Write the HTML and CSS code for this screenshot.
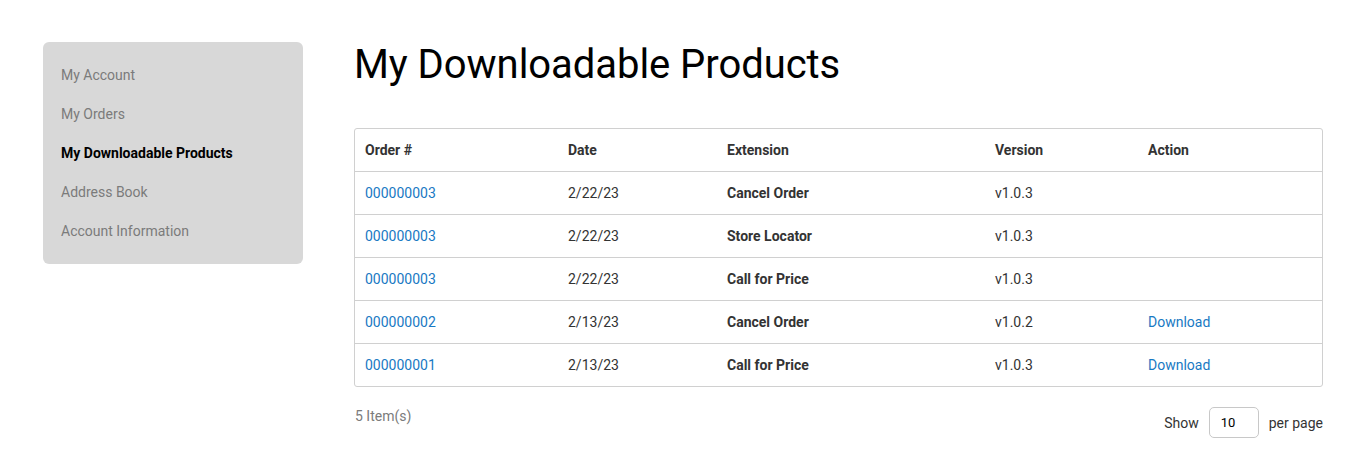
FILE: index.html
```html
<!DOCTYPE html>
<html>
<head>
<meta charset="utf-8">
<link rel="stylesheet" href="styles.css">
</head>
<body>
<div class="page">
  <aside class="sidebar">
    <ul class="nav">
      <li class="nav-item">My Account</li>
      <li class="nav-item">My Orders</li>
      <li class="nav-item active">My Downloadable Products</li>
      <li class="nav-item">Address Book</li>
      <li class="nav-item">Account Information</li>
    </ul>
  </aside>
  <main class="main">
    <h1 class="title">My Downloadable Products</h1>
    <div class="table-wrap">
      <table class="table">
        <colgroup>
          <col class="c1"><col class="c2"><col class="c3"><col class="c4"><col class="c5">
        </colgroup>
        <thead>
          <tr><th>Order #</th><th>Date</th><th>Extension</th><th>Version</th><th>Action</th></tr>
        </thead>
        <tbody>
          <tr><td><a class="link">000000003</a></td><td>2/22/23</td><td class="ext">Cancel Order</td><td>v1.0.3</td><td></td></tr>
          <tr><td><a class="link">000000003</a></td><td>2/22/23</td><td class="ext">Store Locator</td><td>v1.0.3</td><td></td></tr>
          <tr><td><a class="link">000000003</a></td><td>2/22/23</td><td class="ext">Call for Price</td><td>v1.0.3</td><td></td></tr>
          <tr><td><a class="link">000000002</a></td><td>2/13/23</td><td class="ext">Cancel Order</td><td>v1.0.2</td><td><a class="link">Download</a></td></tr>
          <tr><td><a class="link">000000001</a></td><td>2/13/23</td><td class="ext">Call for Price</td><td>v1.0.3</td><td><a class="link">Download</a></td></tr>
        </tbody>
      </table>
    </div>
    <div class="toolbar">
      <span class="count">5 Item(s)</span>
      <div class="limiter">
        <span>Show</span>
        <div class="select">10</div>
        <span>per page</span>
      </div>
    </div>
  </main>
</div>
</body>
</html>
```
FILE: styles.css
```css
html, body {
  margin: 0;
  padding: 0;
  background: #fff;
  font-family: Roboto, "Liberation Sans", sans-serif;
  font-size: 14px;
  color: #333;
}
.page {
  display: flex;
  align-items: flex-start;
  padding: 42px 40px 0 43px;
  gap: 51px;
}
.sidebar {
  flex: 0 0 260px;
  background: #d8d8d8;
  border-radius: 6px;
  padding: 22px 0 22px 0;
}
.nav {
  list-style: none;
  margin: 0;
  padding: 0;
}
.nav-item {
  padding: 0 18px;
  height: 39px;
  line-height: 22px;
  color: #7b7b7b;
}
.nav-item:last-child { height: 22px; }
.nav-item.active {
  color: #000;
  font-weight: 700;
}
.main {
  flex: 1;
  min-width: 0;
}
.title {
  margin: 0;
  font-size: 40px;
  font-weight: 400;
  color: #000;
  line-height: 46px;
  letter-spacing: -0.05px;
}
.table-wrap {
  margin-top: 40px;
  border: 1px solid #d0d0d0;
  border-radius: 3px;
  overflow: hidden;
}
.table {
  width: 100%;
  border-collapse: collapse;
  table-layout: fixed;
}
.c1 { width: 203px; }
.c2 { width: 159px; }
.c3 { width: 268px; }
.c4 { width: 153px; }
.c5 { width: auto; }
.table th, .table td {
  text-align: left;
  padding: 0 10px;
  height: 42px;
  line-height: 20px;
  vertical-align: middle;
}
.table th {
  font-weight: 700;
  color: #333;
}
.table tbody td {
  border-top: 1px solid #d0d0d0;
}
.table td { color: #333; }
.table td.ext { font-weight: 700; }
.link {
  color: #1979c3;
  text-decoration: none;
}
.toolbar {
  display: flex;
  justify-content: space-between;
  align-items: flex-start;
  margin-top: 19px;
}
.count {
  color: #7b7b7b;
  line-height: 20px;
  padding-left: 1px;
}
.limiter {
  display: flex;
  align-items: center;
  gap: 10px;
  margin-top: 1px;
}
.select {
  width: 50px;
  height: 31px;
  box-sizing: border-box;
  border: 1px solid #c8c8c8;
  border-radius: 5px;
  padding-left: 11px;
  line-height: 29px;
  font-size: 13px;
  color: #000;
}
```
